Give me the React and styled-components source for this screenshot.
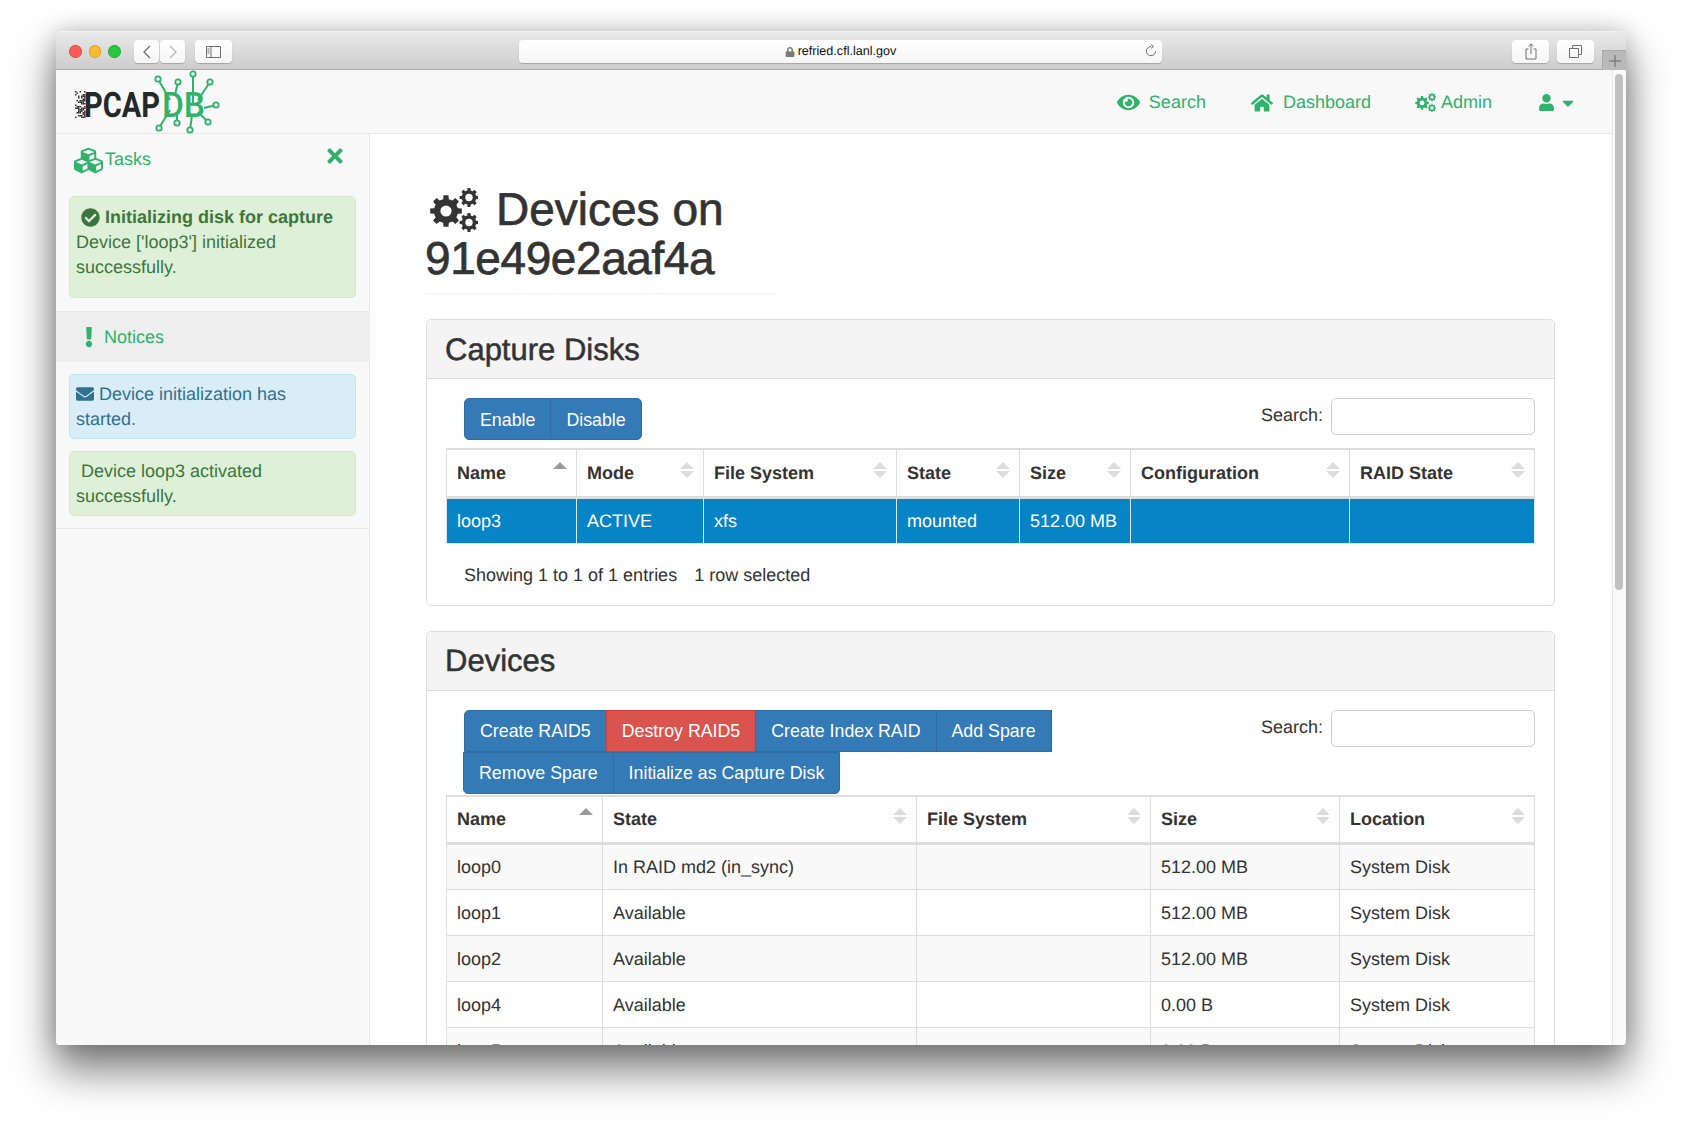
import React from "react";
import styled, { createGlobalStyle } from "styled-components";
import {
  FaCubes, FaTimes, FaCheckCircle, FaExclamation, FaEnvelope, FaEye, FaHome, FaUser, FaCaretDown, FaLock,
} from "react-icons/fa";

const Global = createGlobalStyle`
  html, body { margin: 0; padding: 0; background: #fff; }
  body { font-family: "Liberation Sans", Arial, sans-serif; font-size: 18px; line-height: 25px; color: #333; text-rendering: geometricPrecision; }
  * { box-sizing: border-box; }
`;

const green = "#30b26b";

const Stage = styled.div`
  height: 1125px;
  padding: 31px 56px 80px;
  overflow: hidden;
`;
const Window = styled.div`
  height: 1014px;
  border-radius: 6px 6px 4px 4px;
  overflow: hidden;
  display: flex;
  flex-direction: column;
  background: #fff;
  box-shadow: 0 24px 42px 2px rgba(0, 0, 0, 0.5), 0 0 24px rgba(0, 0, 0, 0.2);
`;
const TitleBar = styled.div`
  height: 39px;
  flex: none;
  display: flex;
  align-items: flex-start;
  background: linear-gradient(#e9e9e9, #cdcdcd);
  border-top: 1px solid #f1f1f1;
  border-bottom: 1px solid #a9a9a9;
  padding: 8px 0 0 13px;
`;
const Light = styled.span`
  width: 13px;
  height: 13px;
  border-radius: 50%;
  margin: 5px 7px 0 0;
  background: ${(p) => p.$c};
  border: 1px solid ${(p) => p.$b};
`;
const ChromeBtn = styled.span`
  width: ${(p) => p.$w}px;
  height: 23px;
  margin-left: ${(p) => p.$ml || 0}px;
  flex: none;
  display: flex;
  align-items: center;
  justify-content: center;
  background: linear-gradient(#fff, #f5f5f5);
  border-radius: 4px;
  box-shadow: 0 1px 1px rgba(0, 0, 0, 0.22);
`;
const Url = styled.div`
  width: 643px;
  height: 23px;
  margin-left: 287px;
  flex: none;
  border-radius: 4px;
  background: linear-gradient(#fff, #f6f6f6);
  box-shadow: 0 1px 1px rgba(0, 0, 0, 0.22);
  display: flex;
  align-items: center;
  position: relative;
  justify-content: center;
  font-size: 12.6px;
  color: #111;
  gap: 3px;
`;
const Reload = styled.span`
  position: absolute;
  right: 4px;
  top: 4px;
  display: flex;
`;
const PlusTab = styled.span`
  width: 24px;
  height: 21px;
  margin: 10px 0 0 8px;
  flex: none;
  background: #b9b9b9;
  border-left: 1px solid #a9a9a9;
  border-top: 1px solid #a9a9a9;
  display: flex;
  align-items: center;
  justify-content: center;
`;
const Page = styled.div`
  flex: 1;
  min-height: 0;
  display: flex;
`;
const Content = styled.div`
  flex: 1;
  min-width: 0;
  display: flex;
  flex-direction: column;
`;
const Track = styled.div`
  width: 14px;
  flex: none;
  background: #fafafa;
  border-left: 1px solid #e8e8e8;
  padding: 4px 3px 0 2px;
`;
const Thumb = styled.div`
  height: 516px;
  border-radius: 4px;
  background: #c1c1c1;
`;
const Navbar = styled.div`
  height: 64px;
  flex: none;
  background: #f8f8f8;
  border-bottom: 1px solid #e7e7e7;
  display: flex;
  align-items: center;
  justify-content: space-between;
  padding-right: 35px;
`;
const Logo = styled.svg`
  width: 160px;
  height: 64px;
  margin-left: 14px;
  flex: none;
`;
const NavItems = styled.nav`
  display: flex;
  align-items: center;
  color: ${green};
  padding-top: 2px;
`;
const NavItem = styled.span`
  display: flex;
  align-items: center;
  gap: ${(p) => p.$gap}px;
  margin-left: ${(p) => p.$ml}px;
`;
const Columns = styled.div`
  flex: 1;
  min-height: 0;
  display: flex;
`;
const Sidebar = styled.aside`
  width: 314px;
  flex: none;
  background: #f8f8f8;
  border-right: 1px solid #e7e7e7;
`;
const TasksHead = styled.div`
  height: 62px;
  display: flex;
  justify-content: space-between;
  color: ${green};
  padding: 13px 23px 0 18px;
`;
const TasksTitle = styled.span`
  display: flex;
  align-items: flex-start;
  gap: 2px;
  line-height: 24px;
  svg { margin-top: -1px; }
`;
const Close = styled.span`
  display: flex;
  margin-top: -2px;
`;
const Alert = styled.div`
  margin: 0 13px 12px;
  padding: ${(p) => p.$pad || "7px 30px 6px 6px"};
  border-radius: 5px;
  border: 1px solid ${(p) => (p.$kind === "info" ? "#bce8f1" : "#d6e9c6")};
  background: ${(p) => (p.$kind === "info" ? "#d9edf7" : "#dff0d8")};
  color: ${(p) => (p.$kind === "info" ? "#31708f" : "#3c763d")};
  line-height: 25px;
`;
const AlertHead = styled.div`
  font-weight: 700;
  padding-left: 5px;
  display: flex;
  align-items: center;
  gap: 5px;
  white-space: nowrap;
  svg { flex: none; }
`;
const InlineIcon = styled.span`
  display: inline-block;
  vertical-align: -3px;
  margin-right: 5px;
  line-height: 0;
`;
const NoticesBar = styled.div`
  height: 51px;
  margin: 13px 0 12px;
  background: #eee;
  border-top: 1px solid #e7e7e7;
  color: ${green};
  display: flex;
  align-items: center;
  gap: 5px;
  padding-left: 23px;
`;
const SideRule = styled.div`
  border-top: 1px solid #e7e7e7;
`;
const Main = styled.main`
  flex: 1;
  min-width: 0;
  overflow: hidden;
  padding: 51px 57px 0 56px;
`;
const Title = styled.h1`
  width: 351px;
  margin: 0 0 25px;
  padding-bottom: 10px;
  border-bottom: 1px solid #eee;
  font-size: 46px;
  line-height: 49px;
  font-weight: 400;
  color: #333;
  -webkit-text-stroke: 0.7px #333;
  white-space: nowrap;
`;
const TitleHost = styled.span`
  letter-spacing: -0.42px;
  margin-left: -1px;
`;
const TitleIcon = styled.span`
  display: inline-block;
  line-height: 0;
  vertical-align: -7px;
  margin: 0 18px 0 4px;
  -webkit-text-stroke: 0;
`;
const Panel = styled.section`
  border: 1px solid #ddd;
  border-radius: 5px;
  margin-bottom: 25px;
  background: #fff;
`;
const PanelHead = styled.div`
  height: 59px;
  background: #f4f4f4;
  border-bottom: 1px solid #ddd;
  border-radius: 5px 5px 0 0;
  padding-left: 18px;
  display: flex;
  align-items: center;
`;
const PanelTitle = styled.h3`
  margin: 0;
  font-size: 31px;
  line-height: 33px;
  font-weight: 400;
  -webkit-text-stroke: 0.5px #333;
`;
const PanelBody = styled.div`
  padding: 19px 19px 0;
`;
const Toolbar = styled.div`
  display: flex;
  justify-content: space-between;
  align-items: flex-start;
  padding-left: 18px;
  min-height: ${(p) => p.$h}px;
`;
const BtnRows = styled.div`
  display: flex;
  flex-direction: column;
`;
const BtnRow = styled.div`
  display: flex;
  margin-left: ${(p) => p.$ml || 0}px;
`;
const Btn = styled.button`
  height: 42px;
  padding: 2px 15px 0;
  font: 400 17.8px/25px "Liberation Sans", Arial, sans-serif;
  color: #fff;
  white-space: nowrap;
  background: ${(p) => (p.$danger ? "#d9534f" : "#337ab7")};
  border: 1px solid ${(p) => (p.$danger ? "#d43f3a" : "#2e6da4")};
  margin-left: -1px;
  border-radius: ${(p) => p.$r || "0"};
  &:first-child { margin-left: 0; }
`;
const SearchBox = styled.label`
  display: flex;
  align-items: flex-start;
  gap: 8px;
  line-height: 34px;
`;
const SearchInput = styled.input`
  width: 204px;
  height: 37px;
  border: 1px solid #ccc;
  border-radius: 5px;
  background: #fff;
`;
const Table = styled.table`
  width: 1089px;
  table-layout: fixed;
  border-collapse: collapse;
  border: 1px solid #ddd;
`;
const Th = styled.th`
  height: 48px;
  padding: 1px 10px 0;
  text-align: left;
  font-weight: 700;
  border: 1px solid #ddd;
  border-top-width: 2px;
  border-bottom-width: 3px;
`;
const ThInner = styled.div`
  display: flex;
  justify-content: space-between;
  align-items: flex-start;
  svg { flex: none; margin: -1px -1px 0 0; }
`;
const Row = styled.tr`
  background: ${(p) => (p.$selected ? "#0684c6" : p.$striped ? "#f9f9f9" : "#fff")};
  color: ${(p) => (p.$selected ? "#fff" : "#333")};
`;
const Td = styled.td`
  height: 46px;
  padding: 1px 10px 0;
  border: 1px solid ${(p) => (p.$selected ? "#d9e8f2" : "#ddd")};
  white-space: nowrap;
`;
const Info = styled.div`
  display: flex;
  gap: 17px;
  padding: 19px 0 17px 18px;
`;

const Sort = ({ active }) => (
  <svg width="14" height="20" viewBox="0 0 14 20">
    <path d="M7 2 L14 9 H0 Z" fill={active ? "#9a9a9a" : "#dcdcdc"} />
    {!active && <path d="M0 11 H14 L7 18 Z" fill="#dcdcdc" />}
  </svg>
);

function gearPath(cx, cy, rOut, rIn, hole, teeth = 8) {
  const pts = [];
  const step = (Math.PI * 2) / teeth;
  for (let i = 0; i < teeth; i++) {
    const a = i * step;
    const w = step * 0.2;
    const w2 = step * 0.3;
    [[rIn, a - w2], [rOut, a - w], [rOut, a + w], [rIn, a + w2]].forEach(([r, t]) => {
      pts.push(`${(cx + r * Math.cos(t)).toFixed(2)} ${(cy + r * Math.sin(t)).toFixed(2)}`);
    });
  }
  return `M${pts.join("L")}Z M${cx - hole} ${cy}a${hole} ${hole} 0 1 0 ${hole * 2} 0a${hole} ${hole} 0 1 0 ${-hole * 2} 0Z`;
}

const Cogs = ({ width, height }) => (
  <svg width={width} height={height} viewBox="0 0 48 44" fill="currentColor">
    <path fillRule="evenodd" d={gearPath(16, 23, 16, 12.2, 5.6)} />
    <path fillRule="evenodd" d={gearPath(39, 9.5, 9.5, 7.3, 3.7)} />
    <path fillRule="evenodd" d={gearPath(39, 34.5, 9.5, 7.3, 3.7)} />
  </svg>
);

const nodes = [
  [88, 9, 100, 30], [108, 12, 105, 25], [123, 4, 123, 35], [140, 12, 128, 30], [146, 35, 134, 38],
  [138, 52, 128, 42], [120, 60, 122, 45], [107, 53, 107, 42], [89, 58, 100, 40],
];
const noise = [];
for (let x = 0; x < 10; x += 1.5) {
  for (let y = 0; y < 26; y += 1.5) {
    const v = Math.sin(x * 12.9898 + y * 78.233) * 43758.5453;
    if (v - Math.floor(v) < 0.3 + x * 0.05) noise.push([x, y]);
  }
}

const PcapLogo = () => (
  <Logo viewBox="0 0 160 64">
    {noise.map(([x, y]) => (
      <rect key={`${x}-${y}`} x={x + 5} y={y + 21} width="1.5" height="1.5" fill="#333" />
    ))}
    <text x="14" y="47" fontFamily="Roboto, sans-serif" fontWeight="700" fontSize="35" fill="#25282a" textLength="76" lengthAdjust="spacingAndGlyphs">PCAP</text>
    <text x="92" y="47" fontFamily="Roboto, sans-serif" fontWeight="500" fontSize="35" fill={green} textLength="43" lengthAdjust="spacingAndGlyphs">DB</text>
    {nodes.map(([cx, cy, x2, y2]) => (
      <g key={`${cx}-${cy}`}>
        <line x1={cx} y1={cy} x2={x2} y2={y2} stroke={green} strokeWidth="2" />
        <circle cx={cx} cy={cy} r="2.7" fill="#f8f8f8" stroke={green} strokeWidth="1.8" />
      </g>
    ))}
  </Logo>
);

const capture = {
  cols: [130, 127, 193, 123, 111, 219, 185],
  head: ["Name", "Mode", "File System", "State", "Size", "Configuration", "RAID State"],
};
const devices = {
  cols: [156, 314, 234, 189, 195],
  head: ["Name", "State", "File System", "Size", "Location"],
  rows: [
    ["loop0", "In RAID md2 (in_sync)", "", "512.00 MB", "System Disk"],
    ["loop1", "Available", "", "512.00 MB", "System Disk"],
    ["loop2", "Available", "", "512.00 MB", "System Disk"],
    ["loop4", "Available", "", "0.00 B", "System Disk"],
    ["loop5", "Available", "", "0.00 B", "System Disk"],
  ],
};

const Head = ({ cols, head }) => (
  <>
    <colgroup>{cols.map((w, i) => <col key={i} width={w} />)}</colgroup>
    <thead>
      <tr>
        {head.map((h, i) => (
          <Th key={h}>
            <ThInner>{h}<Sort active={i === 0} /></ThInner>
          </Th>
        ))}
      </tr>
    </thead>
  </>
);

const Search = () => (
  <SearchBox>Search:<SearchInput /></SearchBox>
);

const gray = "#6e6e6e";

export default function App() {
  return (
    <Stage>
      <Global />
      <Window>
        <TitleBar>
          <Light $c="#fc5b57" $b="#e5453f" />
          <Light $c="#fdbb2d" $b="#dfa023" />
          <Light $c="#27c83f" $b="#1fad2f" />
          <ChromeBtn $w={25} $ml={6}>
            <svg width="10" height="14" viewBox="0 0 10 14"><path d="M8 1 L2 7 L8 13" fill="none" stroke={gray} strokeWidth="1.3" /></svg>
          </ChromeBtn>
          <ChromeBtn $w={25} $ml={1}>
            <svg width="10" height="14" viewBox="0 0 10 14"><path d="M2 1 L8 7 L2 13" fill="none" stroke="#b5b5b5" strokeWidth="1.3" /></svg>
          </ChromeBtn>
          <ChromeBtn $w={37} $ml={10}>
            <svg width="15" height="12" viewBox="0 0 15 12"><path d="M.5.5h14v11H.5zM5 .5v11M1.5 3h2M1.5 5h2M1.5 7h2" fill="none" stroke={gray} /></svg>
          </ChromeBtn>
          <Url>
            <FaLock size={10} color="#777" />
            refried.cfl.lanl.gov
            <Reload>
              <svg width="14" height="14" viewBox="0 0 14 14"><path d="M7 2.5a4.6 4.6 0 1 0 4.6 4.6M7 .7l2.6 1.8L7 4.3" fill="none" stroke={gray} strokeWidth="1" /></svg>
            </Reload>
          </Url>
          <ChromeBtn $w={37} $ml={350}>
            <svg width="12" height="17" viewBox="0 0 12 17"><path d="M3.5 6H1v10h10V6H8.5M6 11V1M3.5 3.2 6 .8l2.5 2.4" fill="none" stroke={gray} /></svg>
          </ChromeBtn>
          <ChromeBtn $w={37} $ml={8}>
            <svg width="13" height="13" viewBox="0 0 13 13"><path d="M3.5 3V.5h9v9H10M.5 3.5h9v9h-9z" fill="none" stroke={gray} /></svg>
          </ChromeBtn>
          <PlusTab>
            <svg width="12" height="12" viewBox="0 0 12 12"><path d="M6 0v12M0 6h12" stroke="#666" /></svg>
          </PlusTab>
        </TitleBar>
        <Page>
          <Content>
            <Navbar>
              <PcapLogo />
              <NavItems>
                <NavItem $gap={9} $ml={0}><FaEye size={23} />Search</NavItem>
                <NavItem $gap={10} $ml={45}><FaHome size={22} />Dashboard</NavItem>
                <NavItem $gap={5} $ml={44}><Cogs width={21} height={19} />Admin</NavItem>
                <NavItem $gap={4} $ml={46}><FaUser size={17} /><FaCaretDown size={18} /></NavItem>
              </NavItems>
            </Navbar>
            <Columns>
              <Sidebar>
                <TasksHead>
                  <TasksTitle><FaCubes size={29} />Tasks</TasksTitle>
                  <Close><FaTimes size={22} /></Close>
                </TasksHead>
                <Alert $kind="success" $pad="8px 30px 17px 6px">
                  <AlertHead><FaCheckCircle size={19} />Initializing disk for capture</AlertHead>
                  Device ['loop3'] initialized successfully.
                </Alert>
                <NoticesBar><FaExclamation size={20} />Notices</NoticesBar>
                <Alert $kind="info">
                  <InlineIcon><FaEnvelope size={18} /></InlineIcon>
                  Device initialization has started.
                </Alert>
                <Alert $kind="success">
                  &nbsp;Device loop3 activated successfully.
                </Alert>
                <SideRule />
              </Sidebar>
              <Main>
                <Title>
                  <TitleIcon><Cogs width={48} height={44} /></TitleIcon>
                  Devices on<br /><TitleHost>91e49e2aaf4a</TitleHost>
                </Title>
                <Panel>
                  <PanelHead><PanelTitle>Capture Disks</PanelTitle></PanelHead>
                  <PanelBody>
                    <Toolbar $h={50}>
                      <BtnRow>
                        <Btn $r="5px 0 0 5px">Enable</Btn>
                        <Btn $r="0 5px 5px 0">Disable</Btn>
                      </BtnRow>
                      <Search />
                    </Toolbar>
                    <Table>
                      <Head cols={capture.cols} head={capture.head} />
                      <tbody>
                        <Row $selected>
                          {["loop3", "ACTIVE", "xfs", "mounted", "512.00 MB", "", ""].map((c, i) => (
                            <Td key={i} $selected>{c}</Td>
                          ))}
                        </Row>
                      </tbody>
                    </Table>
                    <Info><span>Showing 1 to 1 of 1 entries</span><span>1 row selected</span></Info>
                  </PanelBody>
                </Panel>
                <Panel>
                  <PanelHead><PanelTitle>Devices</PanelTitle></PanelHead>
                  <PanelBody>
                    <Toolbar $h={85}>
                      <BtnRows>
                        <BtnRow>
                          <Btn $r="5px 0 0 0">Create RAID5</Btn>
                          <Btn $danger>Destroy RAID5</Btn>
                          <Btn>Create Index RAID</Btn>
                          <Btn>Add Spare</Btn>
                        </BtnRow>
                        <BtnRow $ml={-1}>
                          <Btn $r="0 0 0 5px">Remove Spare</Btn>
                          <Btn $r="0 0 5px 0">Initialize as Capture Disk</Btn>
                        </BtnRow>
                      </BtnRows>
                      <Search />
                    </Toolbar>
                    <Table>
                      <Head cols={devices.cols} head={devices.head} />
                      <tbody>
                        {devices.rows.map((r, i) => (
                          <Row key={r[0]} $striped={i % 2 === 0}>
                            {r.map((c, j) => <Td key={j}>{c}</Td>)}
                          </Row>
                        ))}
                      </tbody>
                    </Table>
                  </PanelBody>
                </Panel>
              </Main>
            </Columns>
          </Content>
          <Track><Thumb /></Track>
        </Page>
      </Window>
    </Stage>
  );
}
